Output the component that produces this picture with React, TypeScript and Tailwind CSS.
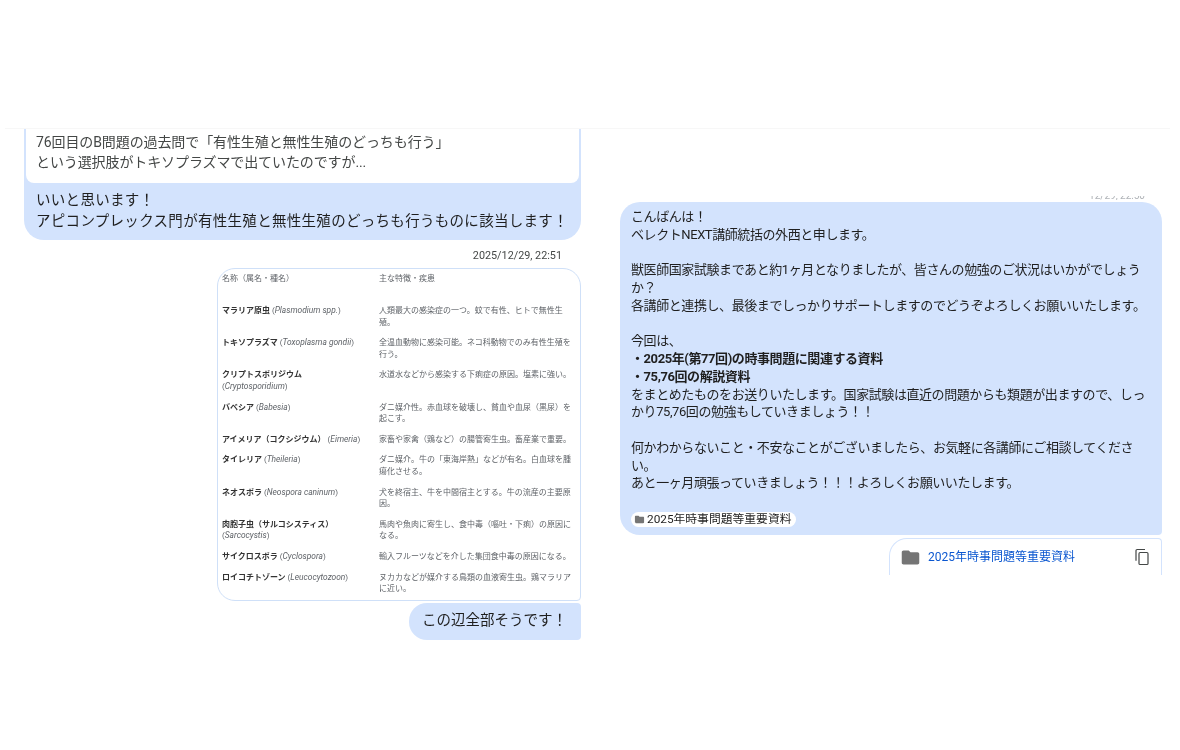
import React from "react";

const font = { fontFamily: 'Roboto, "Noto Sans CJK JP", sans-serif' };

const rows: { name: string; latin: string; desc: string; br?: boolean }[] = [
  { name: "マラリア原虫", latin: "Plasmodium spp.", desc: "人類最大の感染症の一つ。蚊で有性、ヒトで無性生殖。" },
  { name: "トキソプラズマ", latin: "Toxoplasma gondii", desc: "全温血動物に感染可能。ネコ科動物でのみ有性生殖を行う。" },
  { name: "クリプトスポリジウム", latin: "Cryptosporidium", desc: "水道水などから感染する下痢症の原因。塩素に強い。", br: true },
  { name: "バベシア", latin: "Babesia", desc: "ダニ媒介性。赤血球を破壊し、貧血や血尿（黒尿）を起こす。" },
  { name: "アイメリア（コクシジウム）", latin: "Eimeria", desc: "家畜や家禽（鶏など）の腸管寄生虫。畜産業で重要。" },
  { name: "タイレリア", latin: "Theileria", desc: "ダニ媒介。牛の「東海岸熱」などが有名。白血球を腫瘍化させる。" },
  { name: "ネオスポラ", latin: "Neospora caninum", desc: "犬を終宿主、牛を中間宿主とする。牛の流産の主要原因。" },
  { name: "肉胞子虫（サルコシスティス）", latin: "Sarcocystis", desc: "馬肉や魚肉に寄生し、食中毒（嘔吐・下痢）の原因になる。", br: true },
  { name: "サイクロスポラ", latin: "Cyclospora", desc: "輸入フルーツなどを介した集団食中毒の原因になる。" },
  { name: "ロイコチトゾーン", latin: "Leucocytozoon", desc: "ヌカカなどが媒介する鳥類の血液寄生虫。鶏マラリアに近い。" },
];

function Folder({ className }: { className: string }) {
  return (
    <svg viewBox="0 0 24 24" className={className} fill="currentColor">
      <path d="M10 4H4c-1.1 0-2 .9-2 2v12c0 1.1.9 2 2 2h16c1.1 0 2-.9 2-2V8c0-1.1-.9-2-2-2h-8l-2-2z" />
    </svg>
  );
}

export default function App() {
  return (
    <div className="h-[750px] w-[1180px] overflow-hidden bg-white text-[#1f1f1f] blur-[0.35px]" style={font}>
      <div className="h-[129px] ml-[5px] mr-[10px] border-b border-[#f7f7f7]" />
      <div className="flex">
        {/* left conversation */}
        <div className="ml-[24px] w-[557px] flex flex-col items-stretch">
          <div className="bg-[#d3e3fd] rounded-b-[20px] px-[2px]">
            <div className="bg-white rounded-b-[8px] h-[54px] pl-[10px] pt-[3px] text-[14px] leading-[20px] tracking-[-0.1px] text-[#444746] whitespace-nowrap">
              <div>76回目のB問題の過去問で「有性生殖と無性生殖のどっちも行う」</div>
              <div>という選択肢がトキソプラズマで出ていたのですが...</div>
            </div>
            <div className="h-[57px] pl-[10px] pt-[7px] text-[14.5px] leading-[21px] tracking-[0.3px] whitespace-nowrap">
              <div>いいと思います！</div>
              <div>アピコンプレックス門が有性生殖と無性生殖のどっちも行うものに該当します！</div>
            </div>
          </div>
          <div className="mt-[8px] pr-[19px] text-right text-[10.8px] leading-[16px] text-[#444746]">2025/12/29, 22:51</div>
          <div className="mt-[4px] ml-[193px] w-[364px] h-[333px] border-[1.5px] border-[#cfe0f8] rounded-[18px] rounded-br-[4px] pl-[4px] pr-[4px] pt-[4px] overflow-hidden">
            <div className="grid grid-cols-[157px_1fr] text-[8px] leading-[11.6px] text-[#5f6368] h-[32px]">
              <div>名称（属名・種名）</div>
              <div>主な特徴・疾患</div>
            </div>
            {rows.map((r) => (
              <div key={r.name} className="grid grid-cols-[157px_1fr] text-[8px] leading-[11.6px] text-[#5f6368] pb-[9px] last:pb-0">
                <div className="pr-[4px]">
                  <span className="font-bold text-[#333]">{r.name}</span>
                  {r.br ? <br /> : " "}
                  (<i className="text-[8.4px]">{r.latin}</i>)
                </div>
                <div className="pr-[3px]">{r.desc}</div>
              </div>
            ))}
          </div>
          <div className="mt-[2px] self-end w-[172px] h-[37px] bg-[#d3e3fd] rounded-l-[18px] rounded-r-[4px] pl-[13px] text-[14.5px] leading-[36px] whitespace-nowrap">
            この辺全部そうです！
          </div>
        </div>

        {/* right conversation */}
        <div className="ml-[39px] mt-[67px] w-[542px] flex flex-col">
          <div className="h-[4px] overflow-hidden pr-[17px] text-right text-[10px] leading-[0px] text-[#b0b4b8]">12/29, 22:50</div>
          <div className="mt-[2px] h-[333px] bg-[#d3e3fd] rounded-[20px] rounded-br-[4px] pl-[11px] pr-[11px] pt-[6px] text-[13px] leading-[17.75px] tracking-[-0.42px]">
            <div>こんばんは！</div>
            <div>ベレクトNEXT講師統括の外西と申します。</div>
            <div className="h-[17.75px]" />
            <div>獣医師国家試験まであと約1ヶ月となりましたが、皆さんの勉強のご状況はいかがでしょうか？</div>
            <div>各講師と連携し、最後までしっかりサポートしますのでどうぞよろしくお願いいたします。</div>
            <div className="h-[17.75px]" />
            <div>今回は、</div>
            <div className="font-bold">・2025年(第77回)の時事問題に関連する資料</div>
            <div className="font-bold">・75,76回の解説資料</div>
            <div>をまとめたものをお送りいたします。国家試験は直近の問題からも類題が出ますので、しっかり75,76回の勉強もしていきましょう！！</div>
            <div className="h-[17.75px]" />
            <div>何かわからないこと・不安なことがございましたら、お気軽に各講師にご相談してください。</div>
            <div>あと一ヶ月頑張っていきましょう！！！よろしくお願いいたします。</div>
            <div className="mt-[20px] inline-flex items-center h-[15px] bg-white rounded-full pl-[3px] pr-[4px] text-[11.8px] gap-[2px] tracking-normal">
              <Folder className="w-[11px] h-[11px] text-[#757575]" />
              <span>2025年時事問題等重要資料</span>
            </div>
          </div>
          <div className="mt-[3px] self-end w-[273px] h-[37px] border-x-[1.5px] border-t-[1.5px] border-[#d3e3fd] rounded-tl-[18px] rounded-tr-[4px] flex items-center pl-[10px] pr-[10px] text-[12px] text-[#0b57d0]">
            <Folder className="w-[21px] h-[21px] text-[#757575]" />
            <span className="ml-[7px]">2025年時事問題等重要資料</span>
            <svg viewBox="0 0 24 24" className="ml-auto w-[18px] h-[18px] text-[#444746]" fill="none" stroke="currentColor" strokeWidth="1.6">
              <rect x="8" y="6" width="12" height="16" rx="1.5" />
              <path d="M4 17V3.5A1.5 1.5 0 0 1 5.5 2H16" />
            </svg>
          </div>
        </div>
      </div>
    </div>
  );
}
